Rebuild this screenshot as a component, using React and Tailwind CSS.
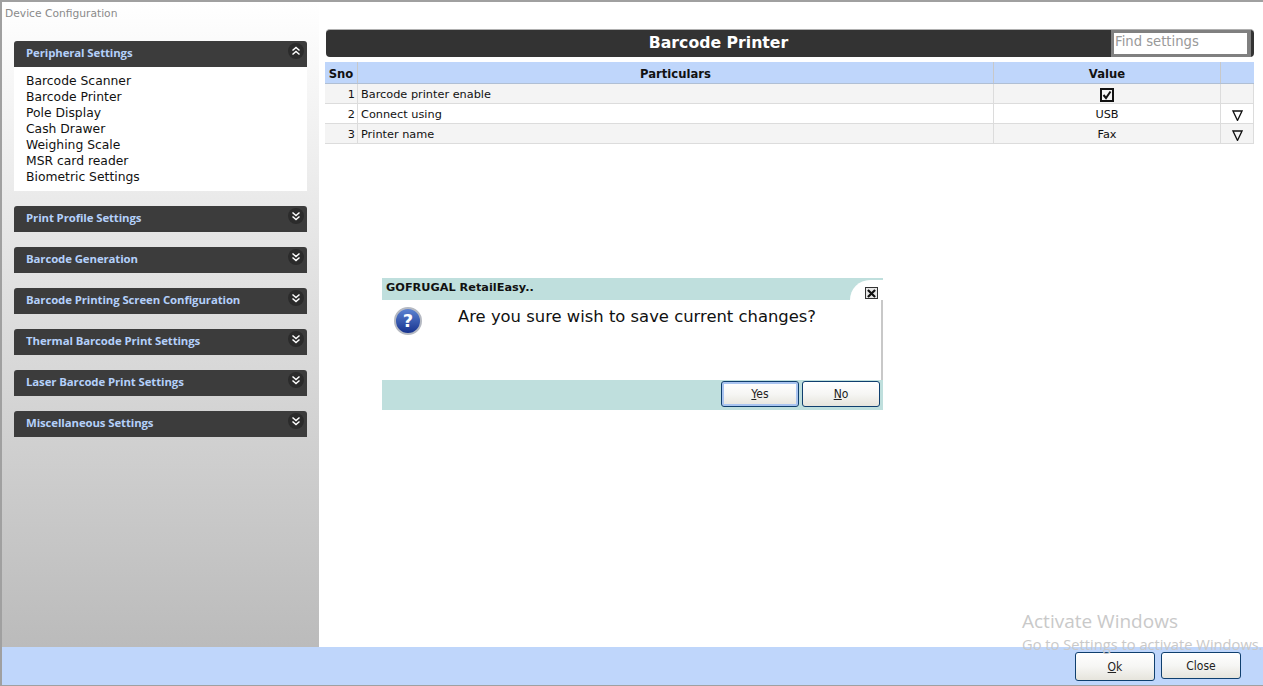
const verdana = "font-['DejaVu_Sans',sans-serif]";

function Chevrons({ up }) {
  return (
    <span className="flex w-[16px] h-[16px] rounded-full bg-[#2b2b2b] items-center justify-center">
      <svg width="10" height="10" viewBox="0 0 10 10" fill="none" stroke="#fff" strokeWidth="1.5">
        {up ? (
          <path d="M1.5 4.5 5 1.5 8.5 4.5M1.5 8.5 5 5.5 8.5 8.5" />
        ) : (
          <path d="M1.5 1.5 5 4.5 8.5 1.5M1.5 5.5 5 8.5 8.5 5.5" />
        )}
      </svg>
    </span>
  );
}

function Head({ label, up }) {
  return (
    <div className="h-[26px] bg-[#3c3c3c] rounded-t-[3px] pl-[12px] pr-[3px] flex items-start justify-between">
      <span className="mt-[4px] text-[11.4px] leading-[16px] font-bold text-[#b4d0fa] font-['Open_Sans',sans-serif] tracking-[-0.1px]">{label}</span>
      <span className="mt-[2px]"><Chevrons up={up} /></span>
    </div>
  );
}

const items = ["Barcode Scanner", "Barcode Printer", "Pole Display", "Cash Drawer", "Weighing Scale", "MSR card reader", "Biometric Settings"];
const sections = ["Print Profile Settings", "Barcode Generation", "Barcode Printing Screen Configuration", "Thermal Barcode Print Settings", "Laser Barcode Print Settings", "Miscellaneous Settings"];

function Cell({ className = "", children }) {
  return <div className={`border-r border-b border-[#dcdcdc] flex items-center pt-[3px] text-[11.3px] leading-[14px] text-[#111] ${className}`}>{children}</div>;
}

function Row({ n, label, value, bg, arrow }) {
  return (
    <div className={`grid grid-cols-[33px_636px_227px_33px] grid-rows-[20px] h-[20px] ${bg}`}>
      <Cell className="justify-end pr-[2px]">{n}</Cell>
      <Cell className="pl-[3px]">{label}</Cell>
      <Cell className="justify-center">{value}</Cell>
      <Cell className="justify-center">
        {arrow && (
          <svg width="11" height="11" viewBox="0 0 11 11" fill="none" stroke="#111" strokeWidth="1.3" className="ml-[1px]">
            <path d="M1 1H10L5.5 10.5Z" />
          </svg>
        )}
      </Cell>
    </div>
  );
}

function Btn({ children, w, h, focus }) {
  return (
    <button className={`rounded-[3px] border border-[#0f3f6e] bg-gradient-to-b from-white via-[#f6f6f4] to-[#e6e4dc] text-[12px] text-[#222] flex items-center justify-center font-['DejaVu_Sans_Condensed','DejaVu_Sans',sans-serif] ${w} ${h} ${focus ? "shadow-[inset_0_0_0_2px_#a9c4f0]" : ""}`}>
      {children}
    </button>
  );
}

export default function App() {
  return (
    <div className={`relative w-[1263px] h-[686px] overflow-hidden bg-white border-t-2 border-l-2 border-[#a0a0a0] flex flex-col ${verdana}`}>
      <div className="flex flex-1 min-h-0">
        <aside className="w-[317px] shrink-0 bg-gradient-to-b from-white to-[#bbbbbb] flex flex-col">
          <div className="h-[24px] pl-[3px] pt-[4px] text-[10.7px] leading-[15px] text-[#8a8a8a]">Device Configuration</div>
          <div className="pl-[12px] pr-[12px] pt-[15px] flex flex-col gap-[15px]">
            <div>
              <Head label="Peripheral Settings" up />
              <div className="bg-white h-[124px] pl-[12px] pt-[6px] text-[12.35px] leading-[16px] text-[#111]">
                {items.map((t) => <div key={t}>{t}</div>)}
              </div>
            </div>
            {sections.map((s) => <Head key={s} label={s} />)}
          </div>
        </aside>
        <main className="flex-1 pl-[6px] pt-[27px]">
          <div className="w-[928px] ml-[1px] h-[28px] bg-[#333333] rounded-[4px] border-t border-[#b0b0b0] flex items-center">
            <span className="flex-1 text-center text-[15.7px] leading-[20px] pb-[2px] font-bold text-white">Barcode Printer</span>
            <div className="mr-[3px] -mt-[1px] w-[140px] h-[27px] bg-white border-[3px] border-[#808080] pl-[1px] text-[13.2px] leading-[18px] text-[#999] border-r-[4px]">Find settings</div>
          </div>
          <div className="mt-[5px] w-[929px]">
            <div className="grid grid-cols-[33px_636px_227px_33px] h-[22px] bg-[#bfd6fb] border-b border-[#b0bfd4] text-[11.6px] leading-[14px] font-bold text-[#111]">
              <div className="border-r border-[#c8c8c8] flex items-center justify-center pt-[2px]">Sno</div>
              <div className="border-r border-[#c8c8c8] flex items-center justify-center pt-[2px]">Particulars</div>
              <div className="border-r border-[#c8c8c8] flex items-center justify-center pt-[2px]">Value</div>
              <div />
            </div>
            <Row n="1" label="Barcode printer enable" bg="bg-[#f4f4f4]" value={
              <svg width="14" height="14" viewBox="0 0 14 14" fill="none">
                <rect x="1" y="1" width="12" height="12" stroke="#111" strokeWidth="2" />
                <path d="M3.5 7 6 10 10.5 3.5" stroke="#111" strokeWidth="2" />
              </svg>
            } />
            <Row n="2" label="Connect using" value="USB" bg="bg-white" arrow />
            <Row n="3" label="Printer name" value="Fax" bg="bg-[#f4f4f4]" arrow />
          </div>
        </main>
      </div>
      <footer className="h-[38px] shrink-0 bg-[#bfd6fb] flex items-start justify-end gap-[6px] pr-[22px] pt-[5px]">
        <Btn w="w-[80px]" h="h-[29px]"><span><u>O</u>k</span></Btn>
        <Btn w="w-[80px]" h="h-[27px]">Close</Btn>
      </footer>
      <div className="h-[1px] shrink-0 bg-[#a0a0a0]" />

      <div className="absolute left-[1020px] top-[607px] text-[#c9c9c9] font-['Open_Sans',sans-serif] pointer-events-none">
        <div className="text-[19px] leading-[25px]">Activate Windows</div>
        <div className="text-[14.7px] leading-[20px] whitespace-nowrap">Go to Settings to activate Windows.</div>
      </div>

      <div className="absolute left-[380px] top-[276px] w-[501px] h-[132px] bg-white flex flex-col">
        <div className="relative h-[22px] bg-[#bfdfdd] pl-[4px] text-[11.3px] leading-[20px] font-bold text-[#111]">
          GOFRUGAL RetailEasy..
          <div className="absolute right-0 top-[2px] w-[33px] h-[20px] bg-white rounded-tl-[20px]" />
          <div className="absolute right-[5px] top-[9px] w-[13px] h-[12px] border border-[#333] bg-[#e8e8e8] flex items-center justify-center">
            <svg width="9" height="9" viewBox="0 0 10 10" stroke="#111" strokeWidth="2.4"><path d="M1 1 9 9M9 1 1 9" /></svg>
          </div>
        </div>
        <div className="flex-1 flex border-r-2 border-[#c8c8c8]">
          <div className="w-[76px] pl-[12px] pt-[7px]">
            <svg width="28" height="28" viewBox="0 0 28 28">
              <defs>
                <linearGradient id="q" x1="0" y1="0" x2="0" y2="1">
                  <stop offset="0" stopColor="#5f86d4" />
                  <stop offset="1" stopColor="#14308c" />
                </linearGradient>
              </defs>
              <circle cx="14" cy="14" r="13" fill="url(#q)" stroke="#b5b9c2" strokeWidth="2" />
              <text x="14" y="20" textAnchor="middle" fontSize="18" fontWeight="700" fill="#fff" fontFamily="DejaVu Sans">?</text>
            </svg>
          </div>
          <div className="pt-[7px] text-[16.4px] leading-[20px] text-[#111]">Are you sure wish to save current changes?</div>
        </div>
        <div className="h-[30px] bg-[#bfdfdd] flex justify-end gap-[3px] pr-[3px] pt-[1px]">
          <Btn w="w-[78px]" h="h-[26px]" focus><span><u>Y</u>es</span></Btn>
          <Btn w="w-[78px]" h="h-[26px]"><span><u>N</u>o</span></Btn>
        </div>
      </div>
    </div>
  );
}
